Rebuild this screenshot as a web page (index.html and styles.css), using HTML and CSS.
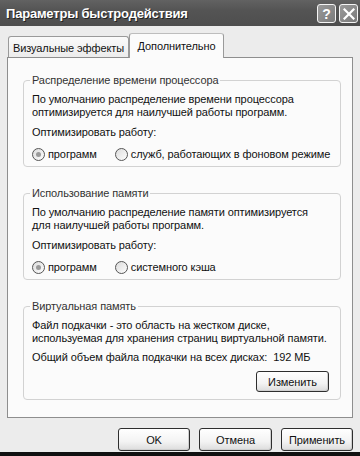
FILE: index.html
```html
<!DOCTYPE html>
<html lang="ru">
<head>
<meta charset="utf-8">
<title>Параметры быстродействия</title>
<link rel="stylesheet" href="styles.css">
</head>
<body>
<div class="window">
  <div class="titlebar">
    <span class="title">Параметры быстродействия</span>
    <div class="caption-buttons">
      <span class="cap-btn">?</span>
      <span class="cap-btn">
        <svg width="12" height="12" viewBox="0 0 12 12"><path d="M1.5 1.5 L10.5 10.5 M10.5 1.5 L1.5 10.5" stroke="#fff" stroke-width="2.2" stroke-linecap="square"/></svg>
      </span>
    </div>
  </div>
  <div class="tabs">
    <div class="tab">Визуальные эффекты</div>
    <div class="tab active">Дополнительно</div>
  </div>
  <div class="panel">
    <fieldset class="group">
      <legend>Распределение времени процессора</legend>
      <p class="desc">По умолчанию распределение времени процессора<br>оптимизируется для наилучшей работы программ.</p>
      <p class="line">Оптимизировать работу:</p>
      <div class="radios">
        <span class="radio"><span class="dot checked"></span>программ</span>
        <span class="radio"><span class="dot"></span>служб, работающих в фоновом режиме</span>
      </div>
    </fieldset>
    <fieldset class="group">
      <legend>Использование памяти</legend>
      <p class="desc">По умолчанию распределение памяти оптимизируется<br>для наилучшей работы программ.</p>
      <p class="line">Оптимизировать работу:</p>
      <div class="radios">
        <span class="radio"><span class="dot checked"></span>программ</span>
        <span class="radio"><span class="dot"></span>системного кэша</span>
      </div>
    </fieldset>
    <fieldset class="group group-vm">
      <legend>Виртуальная память</legend>
      <p class="desc">Файл подкачки - это область на жестком диске,<br>используемая для хранения страниц виртуальной памяти.</p>
      <p class="line">Общий объем файла подкачки на всех дисках:&nbsp; 192 МБ</p>
      <div class="vm-actions"><button class="btn btn-change">Изменить</button></div>
    </fieldset>
  </div>
  <div class="footer">
    <button class="btn btn-ok">OK</button>
    <button class="btn btn-cancel">Отмена</button>
    <button class="btn btn-apply">Применить</button>
  </div>
  <div class="bottom-bar"></div>
</div>
</body>
</html>
```

FILE: styles.css
```css
* { box-sizing: border-box; }
html, body { margin: 0; padding: 0; }
body {
  width: 360px;
  height: 456px;
  overflow: hidden;
  background: #ececec;
  font-family: "Liberation Sans", Arial, sans-serif;
  font-size: 11px;
  letter-spacing: -0.1px;
  color: #111;
  white-space: nowrap;
}
.window {
  width: 360px;
  height: 456px;
  display: flex;
  flex-direction: column;
  background: #ececec;
}
.titlebar {
  height: 26px;
  flex: none;
  background: linear-gradient(#626262, #545454 40%, #4e4e4e);
  display: flex;
  align-items: center;
  justify-content: space-between;
  padding: 0 2px 0 6px;
}
.title {
  color: #fff;
  font-weight: bold;
  font-size: 13px;
  letter-spacing: -0.2px;
  text-shadow: 1px 1px 0 #222;
}
.caption-buttons {
  display: flex;
  gap: 3px;
  align-self: flex-start;
  margin-top: 4px;
}
.cap-btn {
  width: 19px;
  height: 19px;
  border: 1px solid #f4f4f4;
  border-radius: 3px;
  background: linear-gradient(135deg, #9a9a9a, #7a7a7a);
  color: #fff;
  font-weight: bold;
  font-size: 14px;
  display: flex;
  align-items: center;
  justify-content: center;
  line-height: 1;
}
.tabs {
  margin-top: 7px;
  height: 24px;
  flex: none;
  display: flex;
  align-items: flex-end;
  padding-left: 8px;
}
.tab {
  height: 21px;
  width: 121px;
  border: 1px solid #9a9a9a;
  border-bottom: none;
  border-radius: 3px 3px 0 0;
  background: linear-gradient(#fafafa, #ececec);
  display: flex;
  align-items: center;
  justify-content: center;
  padding-top: 1px;
}
.tab.active {
  height: 25px;
  width: 95px;
  margin-bottom: -1px;
  background: #fbfbfb;
  position: relative;
  z-index: 1;
  border-top-color: #bdbdbd;
  padding-bottom: 2px;
}
.panel {
  margin: 0 7px;
  height: 361px;
  flex: none;
  border: 1px solid #8e8e8e;
  background: #fbfbfb;
  padding: 16px 11px 0 15px;
}
.group {
  margin: 0 0 20px 0;
  border: 1px solid #d2d2d2;
  border-radius: 4px;
  padding: 6px 8px 0 8px;
  height: 93px;
}
.group legend {
  padding: 0 2px;
  margin-left: -2px;
  line-height: 13px;
  color: #333;
}
.group-vm { height: 100px; margin-bottom: 0; }
.desc {
  margin: 0;
  line-height: 13px;
}
.line {
  margin: 7px 0 0 0;
  line-height: 13px;
}
.radios {
  margin-top: 9px;
  display: flex;
  gap: 18px;
  line-height: 13px;
}
.radio {
  display: flex;
  align-items: center;
  gap: 3px;
}
.dot {
  width: 13px;
  height: 13px;
  border-radius: 50%;
  border: 1px solid #555;
  background: linear-gradient(135deg, #dcdcdc, #fdfdfd);
  display: flex;
  align-items: center;
  justify-content: center;
}
.dot.checked::after {
  content: "";
  width: 5px;
  height: 5px;
  border-radius: 50%;
  background: #9a9a9a;
}
.group-vm .line { margin-top: 6px; }
.vm-actions {
  display: flex;
  justify-content: flex-end;
  margin-top: 7px;
  padding-right: 3px;
}
.btn {
  font-family: inherit;
  font-size: 11px;
  letter-spacing: -0.1px;
  color: #111;
  height: 21px;
  border: 1px solid #2e2e2e;
  border-radius: 3px;
  background: linear-gradient(#ffffff, #f3f3f3 60%, #dcdcdc);
  box-shadow: inset -1px -1px 0 #cfcfcf;
  padding: 0;
}
.btn-change { width: 73px; }
.footer {
  display: flex;
  justify-content: flex-end;
  gap: 9px;
  padding: 10px 7px 0 0;
}
.btn-ok { width: 72px; height: 23px; }
.btn-cancel { width: 73px; height: 23px; }
.btn-apply { width: 72px; height: 23px; }
.bottom-bar {
  margin-top: auto;
  height: 4px;
  background: #111;
}
```
